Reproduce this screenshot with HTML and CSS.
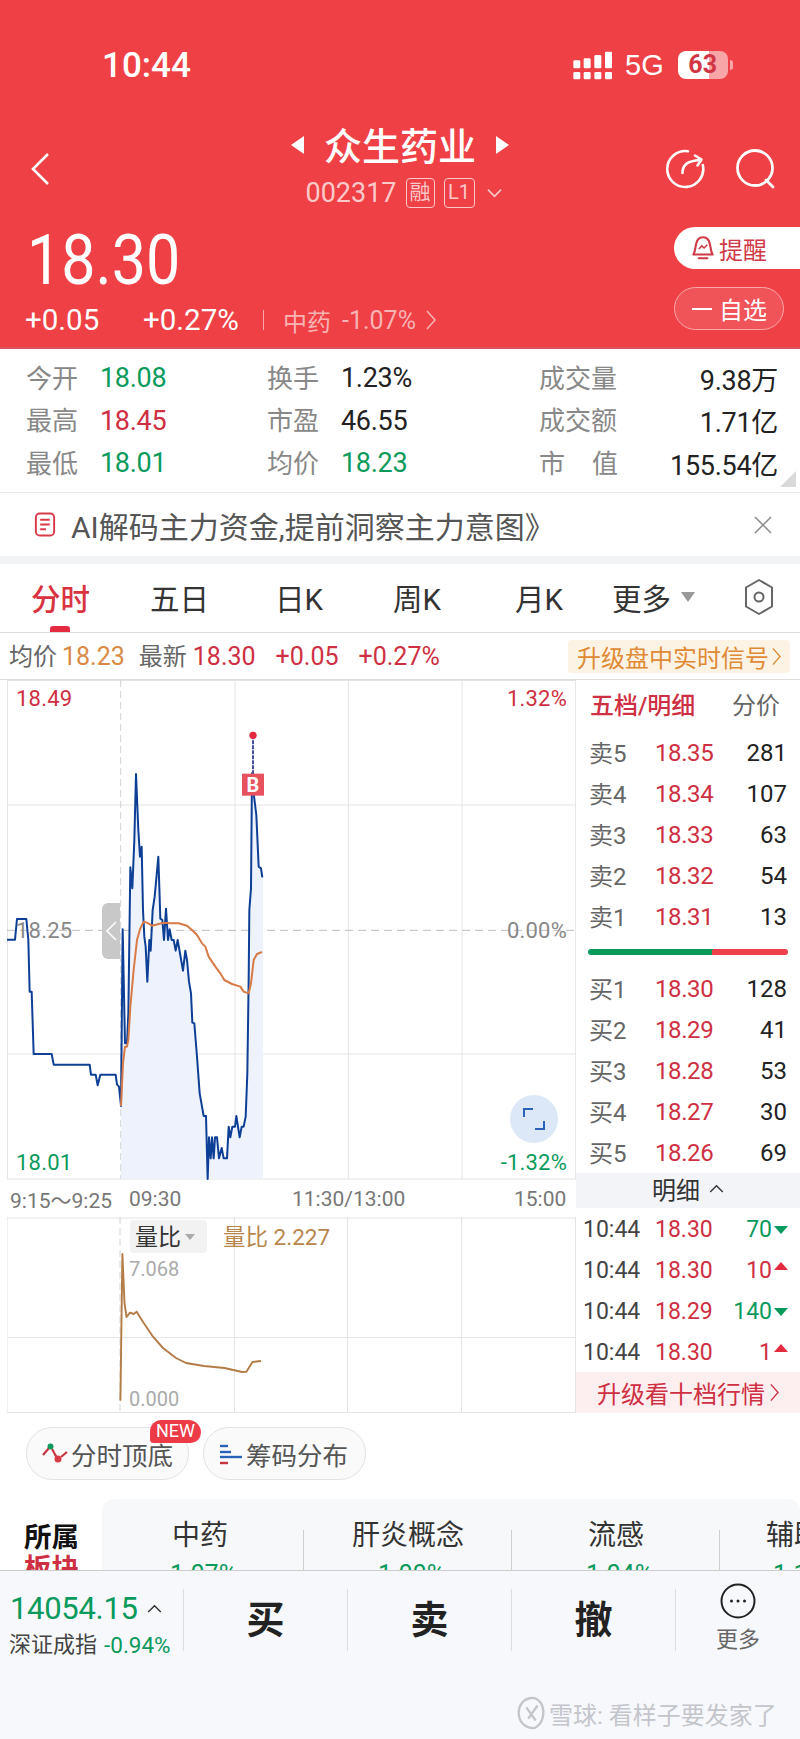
FILE: index.html
```html
<!DOCTYPE html>
<html lang="zh-CN">

<head>
    <meta charset="UTF-8">
    <title>众生药业</title>
    <link rel="stylesheet" href="styles.css">
</head>

<body>
    <div class="content">
        <!-- red header -->
        <header class="head">
            <div class="status">
                <span class="clock">10:44</span>
                <svg class="signal" viewBox="40 30 120 87">
                    <g fill="#fff">
                        <rect x="41" y="93" width="21" height="22" rx="4"/><rect x="72" y="93" width="21" height="22" rx="4"/><rect x="104" y="93" width="21" height="22" rx="4"/><rect x="136" y="93" width="21" height="22" rx="4"/>
                        <rect x="41" y="58" width="21" height="24" rx="4"/><rect x="72" y="52" width="21" height="30" rx="4"/><rect x="104" y="42" width="21" height="40" rx="4"/><rect x="136" y="32" width="21" height="50" rx="4"/>
                    </g>
                </svg>
                <span class="net">5G</span>
                <span class="battery">63</span>
            </div>
            <div class="nav">
                <svg class="back" viewBox="0 0 20 34"><path d="M18 2 3 17l15 15" fill="none" stroke="#fff" stroke-width="2.6"/></svg>
                <div class="nav-mid">
                    <div class="title"><i class="tri-l"></i><span>众生药业</span><i class="tri-r"></i></div>
                    <div class="code">
                        <span>002317</span>
                        <b class="tag">融</b>
                        <b class="tag tag-l">L1</b>
                        <svg class="code-down" viewBox="0 0 16 10"><path d="M1 1.500 8 8.500 15 1.500" fill="none" stroke="#fbc9c9" stroke-width="1.800"/></svg>
                    </div>
                </div>
                <div class="nav-icons">
                    <svg viewBox="0 0 40 40" width="40" height="40" fill="none" stroke="#fff" stroke-width="2.600" stroke-linecap="round" stroke-linejoin="round">
                        <path d="M23 2.200A18 18 0 1 0 37.800 16"/>
                        <path d="M17.500 24C17.500 16 22 12 35 11"/>
                        <path d="M30 6.500 36.500 10.600 32.500 16.500"/>
                    </svg>
                    <svg viewBox="0 0 40 40" width="40" height="40" fill="none" stroke="#fff" stroke-width="2.800" stroke-linecap="round">
                        <circle cx="19" cy="19" r="17.500"/>
                        <path d="M30 31 37 38"/>
                    </svg>
                </div>
            </div>
            <div class="quote">
                <div>
                    <div class="price">18.30</div>
                    <div class="change">
                        <span class="chg-a">+0.05</span>
                        <span class="chg-b">+0.27%</span>
                        <span class="chg-line"></span>
                        <span class="chg-sec">中药</span>
                        <span class="chg-pct">-1.07%</span>
                        <svg class="chg-more" viewBox="0 0 10 20"><path d="M1 1 9 10 1 19" fill="none" stroke="#f8b4b4" stroke-width="1.500"/></svg>
                    </div>
                </div>
                <div class="quote-btns">
                    <div class="btn-alert">
                        <svg viewBox="0 0 24 26" width="26" height="28" fill="none" stroke="#cf3a46" stroke-width="2">
                            <path d="M3 19C6 16 3.500 3 12 3s6 13 9 16z" stroke-linejoin="round"/>
                            <path d="M8 22.500h8" stroke-linecap="round"/>
                            <path d="M8 14l3-3 2 2 3-3" stroke-width="1.400"/>
                        </svg>
                        <span>提醒</span>
                    </div>
                    <div class="btn-watch"><i></i><span>自选</span></div>
                </div>
            </div>
        </header>

        <!-- stats -->
        <section class="stats">
            <div class="stat-row">
                <span class="st-a lab">今开</span><span class="st-b green">18.08</span>
                <span class="st-c lab">换手</span><span class="st-d">1.23%</span>
                <span class="st-e lab">成交量</span><span class="st-f">9.38万</span>
            </div>
            <div class="stat-row">
                <span class="st-a lab">最高</span><span class="st-b red">18.45</span>
                <span class="st-c lab">市盈</span><span class="st-d">46.55</span>
                <span class="st-e lab">成交额</span><span class="st-f">1.71亿</span>
            </div>
            <div class="stat-row">
                <span class="st-a lab">最低</span><span class="st-b green">18.01</span>
                <span class="st-c lab">均价</span><span class="st-d green">18.23</span>
                <span class="st-e lab st-wide"><span>市</span><span>值</span></span><span class="st-f">155.54亿</span>
            </div>
            <i class="stat-corner"></i>
        </section>

        <div class="banner">
            <svg viewBox="0 0 22 26" width="22" height="25" fill="none" stroke="#d93a48" stroke-width="2">
                <rect x="1.500" y="1.500" width="19" height="23" rx="4"/>
                <path d="M6 8h10M6 13h10M6 18h6"/>
            </svg>
            <span class="banner-text">AI解码主力资金,提前洞察主力意图》</span>
            <svg class="banner-x" viewBox="0 0 18 18" width="18" height="18"><path d="M1 1 17 17M17 1 1 17" stroke="#8a8a8a" stroke-width="1.500"/></svg>
        </div>
        <div class="band"></div>

        <!-- period tabs -->
        <nav class="tabs">
            <span class="tab tab-on">分时</span>
            <span class="tab t2">五日</span>
            <span class="tab t3">日K</span>
            <span class="tab t4">周K</span>
            <span class="tab t5">月K</span>
            <span class="tab t6">更多</span>
            <i class="tab-tri"></i>
            <svg class="tab-set" viewBox="0 0 30 38" width="30" height="38" fill="none" stroke="#666" stroke-width="2">
                <path d="M15 2 28 9.500v19L15 36 2 28.500v-19z" stroke-linejoin="round"/>
                <circle cx="15" cy="19" r="4.500"/>
            </svg>
        </nav>

        <div class="info">
            <span class="inf-lab">均价</span><span class="inf-avg">18.23</span>
            <span class="inf-lab inf-gap">最新</span><span class="inf-now">18.30</span>
            <span class="inf-up">+0.05</span>
            <span class="inf-up">+0.27%</span>
            <span class="inf-badge">升级盘中实时信号
                <svg viewBox="0 0 10 20" width="9" height="19"><path d="M1 1 9 10 1 19" fill="none" stroke="#e08a35" stroke-width="1.500"/></svg>
            </span>
        </div>

        <!-- charts and order book -->
        <section class="board">
            <div class="left">
                <div class="chart">
                    <svg class="chart-svg" viewBox="20 0 1707 1500" width="569" height="500">
                        <g stroke="#e4e4e4" stroke-width="3" fill="none">
                            <path d="M20 1.500H1727M20 375H1727M20 1122H1727M20 1497H1727"/>
                            <path d="M21.500 0V1497M704 0V1497M1044 0V1497M1385 0V1497M1726 0V1497"/>
                        </g>
                        <path d="M361 0V1497" stroke="#d4d4d4" stroke-width="3" stroke-dasharray="21 12"/>
                        <path d="M20 751H1727" stroke="#bdbdbd" stroke-width="3" stroke-dasharray="24 15"/>
                        <path fill="#edf2fc" d="M362 1278 367 748 374 1090 380 1090 384 1000 390 562 396 625 402 480 407 282 414 450 419 530 424 500 428 690 432 770 436 800 441 905 447 780 451 812 457 690 463 650 474 530 480 716 486 720 491 780 497 686 503 780 508 748 514 780 520 780 526 812 532 780 548 872 555 812 560 840 566 905 572 940 576 1028 582 1030 590 1130 598 1240 610 1308 617 1308 622 1497 626 1372 631 1435 635 1372 640 1435 644 1372 650 1372 656 1435 664 1404 670 1435 680 1435 685 1340 690 1372 696 1340 704 1340 708 1308 718 1372 724 1340 730 1340 736 1310 741 1180 745 900 747 690 752 625 755 280 760 340 768 405 775 560 782 565 788 592V1497H362z"/>
                        <path fill="none" stroke="#0d3f96" stroke-width="6" stroke-linejoin="round" d="M20 779 44 779 50 717 78 717 84 780 88 935 94 935 100 1122 154 1122 160 1154 268 1154 272 1184 286 1184 292 1216 300 1184 346 1184 350 1214 356 1220 362 1278 367 748 374 1090 380 1090 384 1000 390 562 396 625 402 480 407 282 414 450 419 530 424 500 428 690 432 770 436 800 441 905 447 780 451 812 457 690 463 650 474 530 480 716 486 720 491 780 497 686 503 780 508 748 514 780 520 780 526 812 532 780 548 872 555 812 560 840 566 905 572 940 576 1028 582 1030 590 1130 598 1240 610 1308 617 1308 622 1497 626 1372 631 1435 635 1372 640 1435 644 1372 650 1372 656 1435 664 1404 670 1435 680 1435 685 1340 690 1372 696 1340 704 1340 708 1308 718 1372 724 1340 730 1340 736 1310 741 1180 745 900 747 690 752 625 755 280 760 340 768 405 775 560 782 565 786 592"/>
                        <path fill="none" stroke="#d87a45" stroke-width="6" stroke-linejoin="round" d="M362 1278 368 1150 374 1100 380 1100 384 1080 390 980 400 870 410 780 420 745 430 725 440 728 455 737 475 732 490 728 510 730 535 730 560 737 575 750 590 765 605 790 615 800 625 830 645 860 660 880 672 900 695 912 720 920 730 935 745 940 752 910 760 840 770 822 785 816"/>
                        <path d="M758 166V285" stroke="#4a4f9c" stroke-width="6" stroke-dasharray="12 3"/>
                        <circle cx="758" cy="166" r="11" fill="#e5293f"/>
                        <rect x="725" y="281" width="66" height="66" fill="#e8525f"/>
                    </svg>
                    <span class="b-mark">B</span>
                    <span class="lb lb-top red">18.49</span>
                    <span class="lb lb-mid grey">18.25</span>
                    <span class="lb lb-low green">18.01</span>
                    <span class="rb lb-top red">1.32%</span>
                    <span class="rb lb-mid grey">0.00%</span>
                    <span class="rb lb-low green">-1.32%</span>
                    <div class="handle">
                        <svg viewBox="0 0 12 20" width="12" height="20"><path d="M11 1 2 10l9 9" fill="none" stroke="#fff" stroke-width="1.500"/></svg>
                    </div>
                    <div class="expand">
                        <svg viewBox="0 0 22 22" width="22" height="22" fill="none" stroke="#2a62b8" stroke-width="2"><path d="M1 9V1H10M21 13V21H12"/></svg>
                    </div>
                </div>
                <div class="axis">
                    <span class="ax1">9:15～9:25</span>
                    <span class="ax2">09:30</span>
                    <span class="ax3">11:30/13:00</span>
                    <span class="ax4">15:00</span>
                </div>
                <div class="sub">
                    <svg class="chart-svg" viewBox="7 1217 569 196" width="569" height="196">
                        <g stroke="#e4e4e4" stroke-width="1" fill="none">
                            <path d="M7 1218H576M7 1337.500H576M7 1412.500H576"/>
                            <path d="M7 1217V1413M234.500 1217V1413M347.500 1217V1413M461.500 1217V1413M575.500 1217V1413"/>
                        </g>
                        <path d="M120 1217V1413" stroke="#d4d4d4" stroke-dasharray="7 4"/>
                        <path fill="none" stroke="#b37b45" stroke-width="1.900" stroke-linejoin="round" d="M120.400 1400.700 122.400 1254 124.500 1303 126.500 1317 130 1312.700 133.700 1314 136.700 1311.700 142.900 1321.700 153 1336.700 163 1348 176 1358 186 1363 204 1366 224.500 1368 242 1372 246.400 1371.700 252.500 1362 261 1361"/>
                    </svg>
                    <div class="sub-chip"><span>量比</span><i></i></div>
                    <span class="sub-val">量比 2.227</span>
                    <span class="sub-max">7.068</span>
                    <span class="sub-min">0.000</span>
                </div>
            </div>
            <aside class="book">
                <div class="book-head"><span class="book-title">五档/明细</span><span class="book-mode">分价</span></div>
                <div class="lv"><span class="lv-n">卖5</span><span class="lv-p">18.35</span><span class="lv-q">281</span></div>
                <div class="lv"><span class="lv-n">卖4</span><span class="lv-p">18.34</span><span class="lv-q">107</span></div>
                <div class="lv"><span class="lv-n">卖3</span><span class="lv-p">18.33</span><span class="lv-q">63</span></div>
                <div class="lv"><span class="lv-n">卖2</span><span class="lv-p">18.32</span><span class="lv-q">54</span></div>
                <div class="lv"><span class="lv-n">卖1</span><span class="lv-p">18.31</span><span class="lv-q">13</span></div>
                <div class="ratio"><div class="ratio-bar"></div></div>
                <div class="lv"><span class="lv-n">买1</span><span class="lv-p">18.30</span><span class="lv-q">128</span></div>
                <div class="lv"><span class="lv-n">买2</span><span class="lv-p">18.29</span><span class="lv-q">41</span></div>
                <div class="lv"><span class="lv-n">买3</span><span class="lv-p">18.28</span><span class="lv-q">53</span></div>
                <div class="lv"><span class="lv-n">买4</span><span class="lv-p">18.27</span><span class="lv-q">30</span></div>
                <div class="lv"><span class="lv-n">买5</span><span class="lv-p">18.26</span><span class="lv-q">69</span></div>
                <div class="detail">明细
                    <svg viewBox="0 0 16 10" width="15" height="9"><path d="M1 9 8 2l7 7" fill="none" stroke="#333" stroke-width="1.500"/></svg>
                </div>
                <div class="tr"><span class="tr-t">10:44</span><span class="tr-p">18.30</span><span class="tr-q green">70</span><i class="dn"></i></div>
                <div class="tr"><span class="tr-t">10:44</span><span class="tr-p">18.30</span><span class="tr-q red">10</span><i class="up"></i></div>
                <div class="tr"><span class="tr-t">10:44</span><span class="tr-p">18.29</span><span class="tr-q green">140</span><i class="dn"></i></div>
                <div class="tr"><span class="tr-t">10:44</span><span class="tr-p">18.30</span><span class="tr-q red">1</span><i class="up"></i></div>
                <div class="upgrade">升级看十档行情
                    <svg viewBox="0 0 10 20" width="9" height="19"><path d="M1 1 9 10 1 19" fill="none" stroke="#cf2f42" stroke-width="1.500"/></svg>
                </div>
            </aside>
        </section>

        <!-- chips -->
        <div class="chips">
            <div class="chip">
                <svg viewBox="0 0 26 22" width="26" height="22" fill="none" stroke-width="2.200">
                    <path d="M1 12 7 5" stroke="#c9353f"/>
                    <path d="M10 6 15 15" stroke="#c9353f"/>
                    <path d="M19 14 25 9" stroke="#c9353f"/>
                    <circle cx="8.500" cy="3.500" r="3" fill="#0f9a5d" stroke="none"/>
                    <circle cx="16" cy="16" r="3.500" fill="#d93a48" stroke="none"/>
                </svg>
                <span>分时顶底</span>
                <b class="chip-new">NEW</b>
            </div>
            <div class="chip">
                <svg viewBox="0 0 24 22" width="24" height="22" fill="none" stroke-width="2.400">
                    <path d="M1 3H9" stroke="#2a62b8"/>
                    <path d="M1 9H12" stroke="#2a62b8"/>
                    <path d="M1 14H23" stroke="#2a62b8"/>
                    <path d="M1 20H9" stroke="#c9353f"/>
                </svg>
                <span>筹码分布</span>
            </div>
        </div>

        <section class="sector">
            <div class="sector-side"><b>所属</b><b class="red">板块</b></div>
            <div class="sector-list">
                <div class="sec-item s1"><div class="sec-name">中药</div><div class="sec-pct">-1.07%</div></div>
                <div class="sec-item"><div class="sec-name">肝炎概念</div><div class="sec-pct">-1.00%</div></div>
                <div class="sec-item"><div class="sec-name">流感</div><div class="sec-pct">-1.04%</div></div>
                <div class="sec-item s4"><div class="sec-name">辅助生殖</div><div class="sec-pct">-1.12%</div></div>
            </div>
        </section>
    </div>

    <!-- bottom bar -->
    <footer class="bar">
        <div class="bar-row">
            <div class="idx">
                <div class="idx-top">
                    <span class="idx-num">14054.15</span>
                    <svg viewBox="0 0 16 10" width="15" height="9"><path d="M1 9 8 2l7 7" fill="none" stroke="#333" stroke-width="1.600"/></svg>
                </div>
                <div class="idx-sub"><span>深证成指</span><span class="idx-pct">-0.94%</span></div>
            </div>
            <div class="act">买</div>
            <div class="act">卖</div>
            <div class="act">撤</div>
            <div class="more">
                <svg viewBox="0 0 36 36" width="36" height="36"><circle cx="18" cy="18" r="16.500" fill="none" stroke="#222" stroke-width="2"/><g fill="#222"><circle cx="11.500" cy="18" r="1.500"/><circle cx="18" cy="18" r="1.500"/><circle cx="24.500" cy="18" r="1.500"/></g></svg>
                <span>更多</span>
            </div>
        </div>
        <div class="mark">
            <svg viewBox="0 0 30 40" width="28" height="40" fill="none" stroke="#c4c5cb" stroke-width="2.500"><path d="M19 4C6 3 1 13 2 22c1 9 8 15 17 14 8-4 10-13 9-20C27 10 24 6 19 4z"/><path d="M10 14 20 28M22 12 12 26"/></svg>
            <span>雪球: 看样子要发家了</span>
        </div>
    </footer>
</body>

</html>
```

FILE: styles.css
```css
* {
    box-sizing: border-box;
}

body {
    margin: 0;
    width: 800px;
    height: 1739px;
    overflow: hidden;
    background-color: #fff;
    font-family: Roboto, "Noto Sans CJK SC", sans-serif;
    color: #222;
}

i {
    display: block;
}

.red {
    color: #cf2f42;
}

.green {
    color: #0a9a5c;
}

.grey {
    color: #888;
}

.content {
    height: 1570px;
    overflow: hidden;
}

/* ---------------- header ---------------- */
.head {
    height: 349px;
    background-color: #ef4045;
    border-bottom: 2px solid #d9555a;
    color: #fff;
}

.status {
    height: 121px;
    padding: 45px 0 36px 102px;
    display: flex;
    align-items: center;
}

.clock {
    font-size: 35px;
    font-weight: 500;
    width: 471px;
}

.signal {
    width: 40px;
    height: 29px;
}

.net {
    margin-left: 12px;
    font-size: 29px;
    font-family: "Liberation Sans", sans-serif;
}

.battery {
    position: relative;
    margin-left: 14px;
    width: 50px;
    height: 28px;
    border-radius: 8px;
    background: linear-gradient(90deg, #fff 62%, #f8a5a8 62%);
    color: #d23543;
    font-size: 25px;
    font-weight: 700;
    line-height: 28px;
    text-align: center;
}

.battery::after {
    content: "";
    position: absolute;
    right: -5px;
    top: 9px;
    width: 3px;
    height: 10px;
    border-radius: 0 3px 3px 0;
    background-color: #f8a5a8;
}

.nav {
    height: 96px;
    display: grid;
    grid-template-columns: 1fr auto 1fr;
    align-items: center;
}

.back {
    width: 20px;
    height: 34px;
    margin-left: 30px;
}

.title {
    height: 48px;
    display: flex;
    align-items: center;
    justify-content: center;
    font-size: 38px;
    font-weight: 500;
}

.title span {
    margin: -4px 20px 0;
}

.tri-l,
.tri-r {
    width: 0;
    height: 0;
    border-top: 9px solid transparent;
    border-bottom: 9px solid transparent;
}

.tri-l {
    border-right: 13px solid #fff;
}

.tri-r {
    border-left: 13px solid #fff;
}

.code {
    height: 48px;
    display: flex;
    align-items: center;
    justify-content: center;
    padding-left: 7px;
    font-size: 27px;
    color: #fbc9c9;
}

.tag {
    margin-left: 9px;
    width: 29px;
    height: 30px;
    border: 1px solid #fbc9c9;
    border-radius: 4px;
    font-size: 21px;
    font-weight: 400;
    line-height: 27px;
    text-align: center;
}

.tag-l {
    width: 31px;
    font-size: 20px;
}

.code-down {
    margin-left: 12px;
    width: 15px;
    height: 10px;
}

.nav-icons {
    display: flex;
    justify-content: flex-end;
    gap: 31px;
    padding-right: 24px;
}

.quote {
    height: 130px;
    display: flex;
    justify-content: space-between;
}

.price {
    margin: 8px 0 0 27px;
    height: 70px;
    font-size: 61px;
    line-height: 70px;
    transform: scaleY(1.15);
}

.change {
    display: flex;
    align-items: center;
    height: 20px;
    margin-top: 15px;
    padding-left: 25px;
    font-size: 29.500px;
}

.chg-a {
    width: 118px;
}

.chg-b {
    width: 120px;
}

.chg-line {
    width: 1px;
    height: 20px;
    background-color: #f8a9a9;
}

.chg-sec {
    margin-left: 19px;
    font-size: 24px;
    color: #f8b4b4;
}

.chg-pct {
    margin-left: 11px;
    font-size: 25px;
    color: #f8b4b4;
}

.chg-more {
    margin-left: 10px;
    width: 10px;
    height: 20px;
}

.quote-btns {
    padding-top: 10px;
    width: 126px;
}

.btn-alert {
    height: 42px;
    padding-left: 16px;
    display: flex;
    align-items: center;
    gap: 3px;
    background-color: #fff;
    border-radius: 21px 0 0 21px;
    color: #cf3a46;
    font-size: 24px;
}

.btn-watch {
    margin-top: 18px;
    width: 110px;
    height: 43px;
    display: flex;
    align-items: center;
    gap: 7px;
    padding-left: 17px;
    border: 1px solid #f8a9a9;
    border-radius: 22px;
    background-color: #f05358;
    font-size: 24px;
}

.btn-watch i {
    width: 20px;
    height: 2px;
    background-color: #fff;
}

/* ---------------- stats ---------------- */
.stats {
    position: relative;
    height: 144px;
    padding-top: 8px;
    border-bottom: 1px solid #e8e8e8;
}

.stat-row {
    display: flex;
    align-items: center;
    height: 42.500px;
    font-size: 27px;
    letter-spacing: -.3px;
}

.lab {
    margin-top: -4px;
    color: #888;
    font-size: 26px;
    letter-spacing: 0;
}

.st-a {
    margin-left: 26px;
    width: 74px;
}

.st-b {
    width: 167px;
}

.st-c {
    width: 74px;
}

.st-d {
    width: 198px;
}

.st-e {
    width: 79px;
}

.st-wide {
    display: flex;
    justify-content: space-between;
}

.st-f {
    width: 160px;
    text-align: right;
}

.stat-corner {
    position: absolute;
    right: 4px;
    bottom: 5px;
    width: 0;
    height: 0;
    border-left: 16px solid transparent;
    border-bottom: 16px solid #d9d9d9;
}

.banner {
    height: 63px;
    display: flex;
    align-items: center;
    padding: 0 28px 0 34px;
}

.banner-text {
    margin-left: 15px;
    font-size: 30px;
    color: #555;
    flex: 1;
}

.band {
    height: 8px;
    background-color: #f2f3f5;
}

/* ---------------- tabs ---------------- */
.tabs {
    position: relative;
    height: 69px;
    display: flex;
    align-items: center;
    border-bottom: 1px solid #ddd;
    font-size: 29.500px;
    color: #333;
    padding-bottom: 2px;
}

.tab-on {
    margin-left: 31px;
    color: #d93340;
    font-weight: 500;
}

.tab-on::after {
    content: "";
    position: absolute;
    left: 50px;
    bottom: 0;
    width: 20px;
    height: 6px;
    border-radius: 3px 3px 0 0;
    background-color: #e5293f;
}

.t2 {
    margin-left: 60px;
}

.t3 {
    margin-left: 66px;
}

.t4 {
    margin-left: 70px;
}

.t5 {
    margin-left: 74px;
}

.t6 {
    margin-left: 49px;
}

.tab-tri {
    margin-left: 10px;
    width: 0;
    height: 0;
    border-left: 7px solid transparent;
    border-right: 7px solid transparent;
    border-top: 10px solid #999;
}

.tab-set {
    margin-left: 49px;
}

.info {
    height: 47px;
    display: flex;
    align-items: center;
    padding-left: 9px;
    font-size: 25px;
    border-bottom: 1px solid #ddd;
}

.inf-lab {
    margin-top: -3px;
    color: #666;
    font-size: 24px;
}

.inf-avg {
    margin-left: 5px;
    color: #d98a45;
}

.inf-gap {
    margin-left: 14px;
}

.inf-now {
    margin-left: 6px;
    color: #cf2f42;
}

.inf-up {
    margin-left: 20px;
    color: #cf2f42;
}

.inf-badge {
    margin-left: auto;
    margin-right: 10px;
    width: 222px;
    height: 33px;
    display: flex;
    align-items: center;
    justify-content: center;
    gap: 3px;
    background-color: #fdf3e4;
    color: #e08a35;
    font-size: 24px;
    border-radius: 4px;
    white-space: nowrap;
}

/* ---------------- board ---------------- */
.board {
    display: flex;
    height: 733px;
}

.left {
    width: 576px;
    padding-left: 7px;
}

.chart {
    position: relative;
    height: 500px;
}

.chart-svg {
    display: block;
}

.lb,
.rb {
    position: absolute;
    font-size: 22px;
    line-height: 26px;
    letter-spacing: .2px;
}

.lb {
    left: 9px;
}

.rb {
    right: 9px;
}

.lb-top {
    top: 6px;
}

.lb-mid {
    top: 238px;
}

.lb-low {
    top: 470px;
}

.b-mark {
    position: absolute;
    left: 235px;
    top: 94px;
    width: 22px;
    height: 22px;
    color: #fff;
    font-size: 20px;
    font-weight: 700;
    line-height: 22px;
    text-align: center;
}

.handle {
    position: absolute;
    left: 95px;
    top: 223px;
    width: 18px;
    height: 56px;
    display: flex;
    align-items: center;
    padding-left: 3px;
    border-radius: 6px 0 0 6px;
    background-color: #c8c8c8;
}

.expand {
    position: absolute;
    left: 503px;
    top: 415px;
    width: 48px;
    height: 48px;
    border-radius: 50%;
    background-color: #dce8f7;
    display: flex;
    align-items: center;
    justify-content: center;
}

.axis {
    height: 37px;
    display: flex;
    align-items: center;
    padding-left: 3px;
    font-size: 21px;
    color: #777;
    white-space: nowrap;
}

.ax1 {
    width: 119px;
}

.ax2 {
    width: 163px;
}

.ax3 {
    width: 222px;
}

.sub {
    position: relative;
    height: 196px;
}

.sub-chip {
    position: absolute;
    left: 123px;
    top: 3px;
    width: 77px;
    height: 33px;
    padding-left: 5px;
    display: flex;
    align-items: center;
    gap: 4px;
    border-radius: 4px;
    background-color: #f2f2f2;
    font-size: 23px;
    color: #333;
}

.sub-chip span {
    margin-top: -4px;
}

.sub-chip i {
    width: 0;
    height: 0;
    border-left: 5px solid transparent;
    border-right: 5px solid transparent;
    border-top: 6px solid #aaa;
}

.sub-val {
    position: absolute;
    left: 216px;
    top: 2px;
    font-size: 22.500px;
    color: #b8864a;
}

.sub-max,
.sub-min {
    position: absolute;
    left: 122px;
    font-size: 20px;
    color: #aaa;
}

.sub-max {
    top: 40px;
}

.sub-min {
    top: 170px;
}

/* ---------------- order book ---------------- */
.book {
    width: 224px;
    border-bottom: 1px solid #e4e4e4;
}

.book-head {
    height: 52px;
    display: flex;
    justify-content: space-between;
    align-items: center;
    padding: 0 20px 6px 14px;
    font-size: 24px;
    color: #666;
}

.book-title {
    color: #cf2f42;
    font-weight: 500;
}

.lv {
    height: 41px;
    display: flex;
    align-items: center;
    padding-left: 13px;
    padding-right: 13px;
    font-size: 24px;
}

.lv-n {
    width: 66px;
    margin-top: -3px;
    color: #666;
}

.lv-p {
    color: #cf2f42;
    letter-spacing: -.4px;
}

.lv-q {
    margin-left: auto;
}

.ratio {
    height: 31px;
    padding: 12px 12px 0;
}

.ratio-bar {
    height: 6px;
    border-radius: 3px;
    background: linear-gradient(100deg, #0a9a5c 62%, #ef3f4b 62%);
}

.detail {
    height: 35px;
    display: flex;
    align-items: center;
    justify-content: center;
    gap: 9px;
    padding-bottom: 5px;
    background-color: #f2f4f8;
    font-size: 24px;
    color: #333;
}

.tr {
    height: 41px;
    display: flex;
    align-items: center;
    padding: 2px 12px 0 7px;
    font-size: 23px;
}

.tr-t {
    width: 72px;
    color: #444;
}

.tr-p {
    color: #cf2f42;
}

.tr-q {
    margin-left: auto;
}

.dn,
.up {
    margin-left: 2px;
    width: 0;
    height: 0;
    border-left: 7px solid transparent;
    border-right: 7px solid transparent;
}

.dn {
    border-top: 8px solid #0a9a5c;
}

.up {
    border-bottom: 8px solid #e5293f;
    margin-bottom: 10px;
}

.upgrade {
    height: 41px;
    display: flex;
    align-items: center;
    justify-content: center;
    gap: 5px;
    background-color: #fdeef0;
    color: #cf2f42;
    font-size: 24px;
}

/* ---------------- chips ---------------- */
.chips {
    height: 86px;
    padding: 14px 0 0 26px;
    display: flex;
    gap: 14px;
}

.chip {
    position: relative;
    width: 163px;
    height: 53px;
    display: flex;
    align-items: center;
    gap: 3px;
    padding-left: 15px;
    border: 1px solid #e2e2e2;
    border-radius: 26px;
    background-color: #fafafa;
    font-size: 25.500px;
    color: #555;
}

.chip-new {
    position: absolute;
    left: 123px;
    top: -8px;
    width: 51px;
    height: 23px;
    border-radius: 12px 13px 11px 4px;
    background-color: #ec3a46;
    color: #fff;
    font-size: 18px;
    font-weight: 400;
    line-height: 22px;
    text-align: center;
}

.sector {
    display: flex;
    height: 120px;
}

.sector-side {
    width: 102px;
    padding: 23px 0 0 24px;
    font-size: 27.500px;
    line-height: 31px;
    color: #111;
}

.sector-side b {
    display: block;
}

.sector-list {
    width: 698px;
    padding-top: 18px;
    display: flex;
    overflow: hidden;
    white-space: nowrap;
    background-color: #f7f8f9;
    border-radius: 12px 12px 0 0;
    text-align: center;
}

.sec-item {
    position: relative;
    flex: none;
    width: 208px;
    font-size: 28px;
    color: #333;
}

.sec-item::after {
    content: "";
    position: absolute;
    right: 0;
    top: 13px;
    width: 1px;
    height: 60px;
    background-color: #cfcfcf;
}

.s1 {
    width: 202px;
    padding-right: 6px;
}

.s4 {
    padding-left: 46px;
    text-align: left;
}

.sec-name {
    line-height: 38px;
}

.sec-pct {
    margin-top: 3px;
    color: #0a9a5c;
    font-size: 25px;
    line-height: 34px;
}

/* ---------------- bottom bar ---------------- */
.bar {
    position: relative;
    height: 169px;
    background-color: #f7f8fc;
    border-top: 1px solid #ccc;
}

.bar-row {
    display: flex;
    align-items: flex-start;
    padding-top: 18px;
}

.idx {
    width: 184px;
    height: 62px;
    padding-left: 10px;
    border-right: 1px solid #ddd;
}

.idx-top {
    display: flex;
    align-items: center;
    gap: 9px;
    height: 38px;
}

.idx-num {
    font-size: 31px;
    color: #0a9a5c;
    letter-spacing: -.3px;
}

.idx-sub {
    display: flex;
    gap: 7px;
    font-size: 22px;
    color: #444;
    margin-left: -1px;
    line-height: 36px;
}

.idx-pct {
    color: #0a9a5c;
    font-size: 22.500px;
}

.act {
    width: 164px;
    height: 62px;
    border-right: 1px solid #ddd;
    text-align: center;
    font-size: 38px;
    font-weight: 700;
    line-height: 62px;
    color: #222;
}

.more {
    flex: 1;
    margin-top: -6px;
    display: flex;
    flex-direction: column;
    align-items: center;
    font-size: 22px;
    color: #666;
    line-height: 32px;
}

.more span {
    margin-top: 5px;
}

.mark {
    position: absolute;
    left: 517px;
    top: 122px;
    display: flex;
    align-items: center;
    gap: 4px;
    font-size: 24px;
    color: #c4c5cb;
    white-space: nowrap;
}
```
